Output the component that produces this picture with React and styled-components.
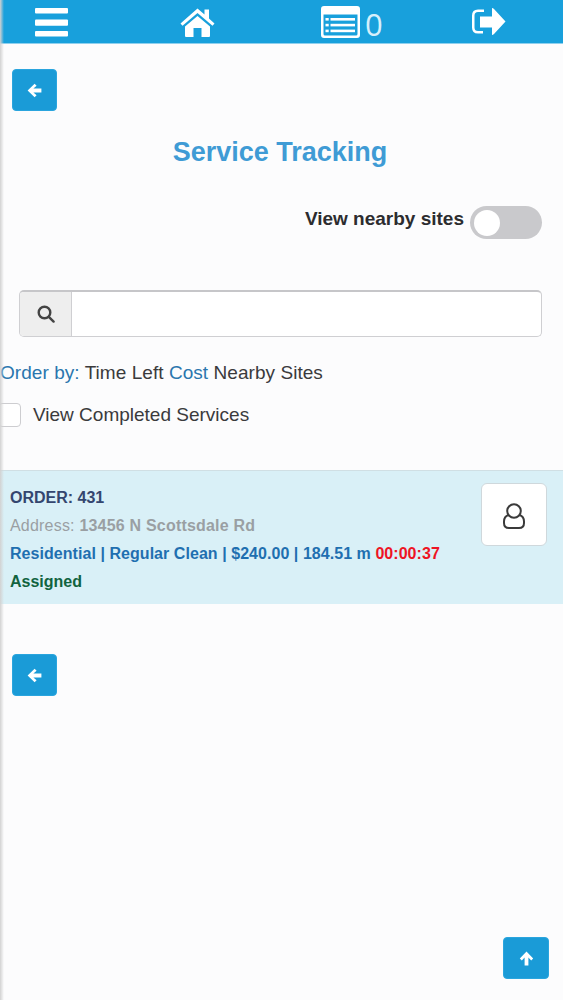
import React from 'react';
import styled, { createGlobalStyle } from 'styled-components';

const GlobalStyle = createGlobalStyle`
  html, body {
    margin: 0;
    padding: 0;
    background: #fcfcfd;
  }
  body {
    font-family: "Liberation Sans", Arial, sans-serif;
    color: #333;
  }
`;

const BarsIcon = () => (
  <svg width="34" height="29" viewBox="0 0 34 29" fill="#fff">
    <rect x="0" y="0" width="33" height="5.6" rx="1" />
    <rect x="0" y="11.4" width="33" height="6.4" rx="1" />
    <rect x="0" y="23" width="33" height="5.6" rx="1" />
  </svg>
);

const HomeIcon = () => (
  <svg width="35" height="29" viewBox="0 0 35 29" fill="#fff">
    <path d="M17.5 0.5 L24.5 6.5 V1.5 H29 V10.5 L34.5 15.5 L32.5 17.8 L17.5 5 L2.5 17.8 L0.5 15.5 Z" />
    <path d="M17.5 8 L30 18.6 V27.8 Q30 29 29 29 H21.5 V20 H13.5 V29 H6 Q5 29 5 27.8 V18.6 Z" />
  </svg>
);

const ListIcon = () => (
  <svg width="39" height="32" viewBox="0 0 39 32" fill="#fff">
    <path
      fillRule="evenodd"
      d="M3 0 H36 Q39 0 39 3 V29 Q39 32 36 32 H3 Q0 32 0 29 V3 Q0 0 3 0 Z M2.5 8.5 V28 Q2.5 29.5 4 29.5 H35 Q36.5 29.5 36.5 28 V8.5 Z"
    />
    <rect x="4.5" y="12" width="3.2" height="2.6" />
    <rect x="4.5" y="17.8" width="3.2" height="2.6" />
    <rect x="4.5" y="23.6" width="3.2" height="2.6" />
    <rect x="9.5" y="12" width="24.5" height="2.6" />
    <rect x="9.5" y="17.8" width="24.5" height="2.6" />
    <rect x="9.5" y="23.6" width="24.5" height="2.6" />
  </svg>
);

const LogoutIcon = () => (
  <svg width="35" height="28" viewBox="0 0 35 28" fill="#fff">
    <path d="M13 1.5 H7 Q1 1.5 1 7.5 V19.5 Q1 25.5 7 25.5 H12 V23 H7 Q3.5 23 3.5 19.5 V7.5 Q3.5 4 7 4 H13 Z" />
    <path d="M21 0 Q22 0 23 1 L34.5 13.5 L23 26 Q22 27 21 27 V19.5 H9 V8.5 H21 Z" />
  </svg>
);

const ArrowIcon = ({ up }) => (
  <svg
    width="15"
    height="15"
    viewBox="0 0 15 15"
    fill="#fff"
    style={up ? { transform: 'rotate(90deg)' } : undefined}
  >
    <path d="M7.6 0.8 L9.6 2.8 L6.4 5.6 H14.4 V9.4 H6.4 L9.6 12.2 L7.6 14.2 L0.6 7.5 Z" />
  </svg>
);

const SearchIcon = () => (
  <svg width="18" height="18" viewBox="0 0 18 18" fill="none" stroke="#444" strokeWidth="2.4">
    <circle cx="7.5" cy="7.5" r="5.8" />
    <path d="M11.8 11.8 L16.6 16.6" strokeLinecap="round" />
  </svg>
);

const UserIcon = () => (
  <svg width="22" height="26" viewBox="0 0 22 26" fill="none" stroke="#3a3a3a" strokeWidth="2">
    <circle cx="11" cy="8" r="6.8" />
    <path d="M5.4 12 C2.6 13 1 15.2 1 18.5 V20 Q1 25 6 25 H16 Q21 25 21 20 V18.5 C21 15.2 19.4 13 16.6 12" />
  </svg>
);

const App = () => {
  return (
    <Page>
      <GlobalStyle />
      <EdgeShade />
      <TopBar>
        <NavItem $shift={1}><BarsIcon /></NavItem>
        <NavItem $shift={1}><HomeIcon /></NavItem>
        <NavItem>
          <ListIcon />
          <Count>0</Count>
        </NavItem>
        <NavItem $shift={1}><LogoutIcon /></NavItem>
      </TopBar>

      <SquareButton $top={25}>
        <ArrowIcon />
      </SquareButton>

      <Title>Service Tracking</Title>

      <NearbyRow>
        <NearbyLabel>View nearby sites</NearbyLabel>
        <Toggle>
          <Knob />
        </Toggle>
      </NearbyRow>

      <SearchGroup>
        <SearchAddon>
          <SearchIcon />
        </SearchAddon>
        <SearchInput type="text" />
      </SearchGroup>

      <OrderLine>
        <BlueText>Order by:</BlueText> Time Left <BlueText>Cost</BlueText> Nearby Sites
      </OrderLine>

      <CheckRow>
        <CheckBox />
        <span>View Completed Services</span>
      </CheckRow>

      <OrderRow>
        <OrderInfo>
          <OrderTitle>ORDER: 431</OrderTitle>
          <Address>
            <AddressLabel>Address:</AddressLabel> 13456 N Scottsdale Rd
          </Address>
          <Details>
            Residential | Regular Clean | $240.00 | 184.51 m <Timer>00:00:37</Timer>
          </Details>
          <Status>Assigned</Status>
        </OrderInfo>
        <AssignButton>
          <UserIcon />
        </AssignButton>
      </OrderRow>

      <SquareButton $top={50}>
        <ArrowIcon />
      </SquareButton>

      <ScrollTop>
        <ArrowIcon up />
      </ScrollTop>
    </Page>
  );
};

const Page = styled.div`
  position: relative;
  width: 563px;
  height: 1000px;
  overflow: hidden;
  background: #fcfcfd;
`;

const EdgeShade = styled.div`
  position: absolute;
  top: 0;
  left: 0;
  bottom: 0;
  width: 4px;
  background: linear-gradient(to right, #d2d2d2, rgba(240, 240, 240, 0));
  pointer-events: none;
  z-index: 2;
`;

const TopBar = styled.div`
  display: grid;
  grid-template-columns: 145px 141px 150px 1fr;
  align-items: center;
  height: 43px;
  padding-left: 35px;
  background: #18a0dc;
  border-bottom: 1px solid #8fd0ee;
`;

const NavItem = styled.div`
  display: flex;
  align-items: center;
  height: 43px;
  padding-top: ${p => p.$shift || 0}px;
  box-sizing: border-box;
`;

const Count = styled.span`
  margin: 5px 0 0 5px;
  font-family: "Open Sans", sans-serif;
  font-weight: 400;
  font-size: 31px;
  line-height: 1;
  color: #d5effb;
`;

const SquareButton = styled.button`
  display: flex;
  align-items: center;
  justify-content: center;
  width: 45px;
  height: 42px;
  margin: ${p => p.$top}px 0 0 12px;
  padding: 0;
  background: #1a9bd7;
  border: 1px solid #2aa5de;
  border-radius: 4px;
`;

const Title = styled.h1`
  margin: 25px 0 0;
  padding-right: 3px;
  font-size: 27px;
  line-height: 32px;
  font-weight: 700;
  text-align: center;
  color: #3f9bd5;
`;

const NearbyRow = styled.div`
  display: flex;
  justify-content: flex-end;
  align-items: center;
  gap: 6px;
  margin-top: 38px;
  padding-right: 21px;
`;

const NearbyLabel = styled.span`
  margin-bottom: 7px;
  font-size: 19px;
  font-weight: 700;
  color: #2c2c2f;
`;

const Toggle = styled.div`
  display: flex;
  align-items: center;
  width: 72px;
  height: 33px;
  padding: 0 4px;
  box-sizing: border-box;
  background: #c9c9cc;
  border-radius: 17px;
`;

const Knob = styled.div`
  width: 26px;
  height: 26px;
  background: #fff;
  border-radius: 50%;
`;

const SearchGroup = styled.div`
  display: flex;
  height: 47px;
  margin: 51px 21px 0 19px;
  box-sizing: border-box;
  background: #fff;
  border: 1px solid #cfcfd2;
  border-top: 2px solid #c6c6c9;
  border-radius: 5px;
`;

const SearchAddon = styled.div`
  display: flex;
  align-items: center;
  justify-content: center;
  width: 51px;
  background: #eeeeee;
  border-right: 1px solid #cfcfd2;
  border-radius: 4px 0 0 4px;
`;

const SearchInput = styled.input`
  flex: 1;
  min-width: 0;
  border: 0;
  background: transparent;
  outline: none;
`;

const OrderLine = styled.div`
  margin-top: 25px;
  font-size: 19px;
  line-height: 22px;
  letter-spacing: 0.05px;
  color: #3a3a3c;
`;

const BlueText = styled.span`
  color: #2a76ae;
`;

const CheckRow = styled.div`
  display: flex;
  align-items: center;
  margin-top: 19px;
  font-size: 19px;
  line-height: 24px;
  color: #3a3a3c;
`;

const CheckBox = styled.div`
  width: 23px;
  height: 24px;
  margin: 0 12px 0 -2px;
  box-sizing: border-box;
  background: #fff;
  border: 1px solid #cdcdd0;
  border-radius: 4px;
`;

const OrderRow = styled.div`
  display: flex;
  justify-content: space-between;
  align-items: flex-start;
  height: 134px;
  margin-top: 43px;
  padding: 12px 16px 0 10px;
  box-sizing: border-box;
  background: #d9f0f7;
  border-top: 1px solid #d0dfe4;
`;

const OrderInfo = styled.div`
  padding-top: 1px;
  font-size: 16px;
  font-weight: 700;
  line-height: 28px;
`;

const OrderTitle = styled.div`
  color: #34466f;
`;

const Address = styled.div`
  letter-spacing: 0.2px;
  color: #9a9fa3;
`;

const AddressLabel = styled.span`
  font-weight: 400;
`;

const Details = styled.div`
  letter-spacing: 0.05px;
  color: #1f6fb0;
`;

const Timer = styled.span`
  color: #ee1424;
`;

const Status = styled.div`
  color: #11633f;
`;

const AssignButton = styled.button`
  display: flex;
  align-items: center;
  justify-content: center;
  width: 66px;
  height: 63px;
  padding: 2px 0 0;
  background: #fff;
  border: 1px solid #cfd8dc;
  border-radius: 6px;
`;

const ScrollTop = styled.button`
  position: absolute;
  left: 503px;
  top: 937px;
  display: flex;
  align-items: center;
  justify-content: center;
  width: 46px;
  height: 42px;
  padding: 0;
  background: #1a9bd7;
  border: 1px solid #2aa5de;
  border-radius: 4px;
`;

export default App;
